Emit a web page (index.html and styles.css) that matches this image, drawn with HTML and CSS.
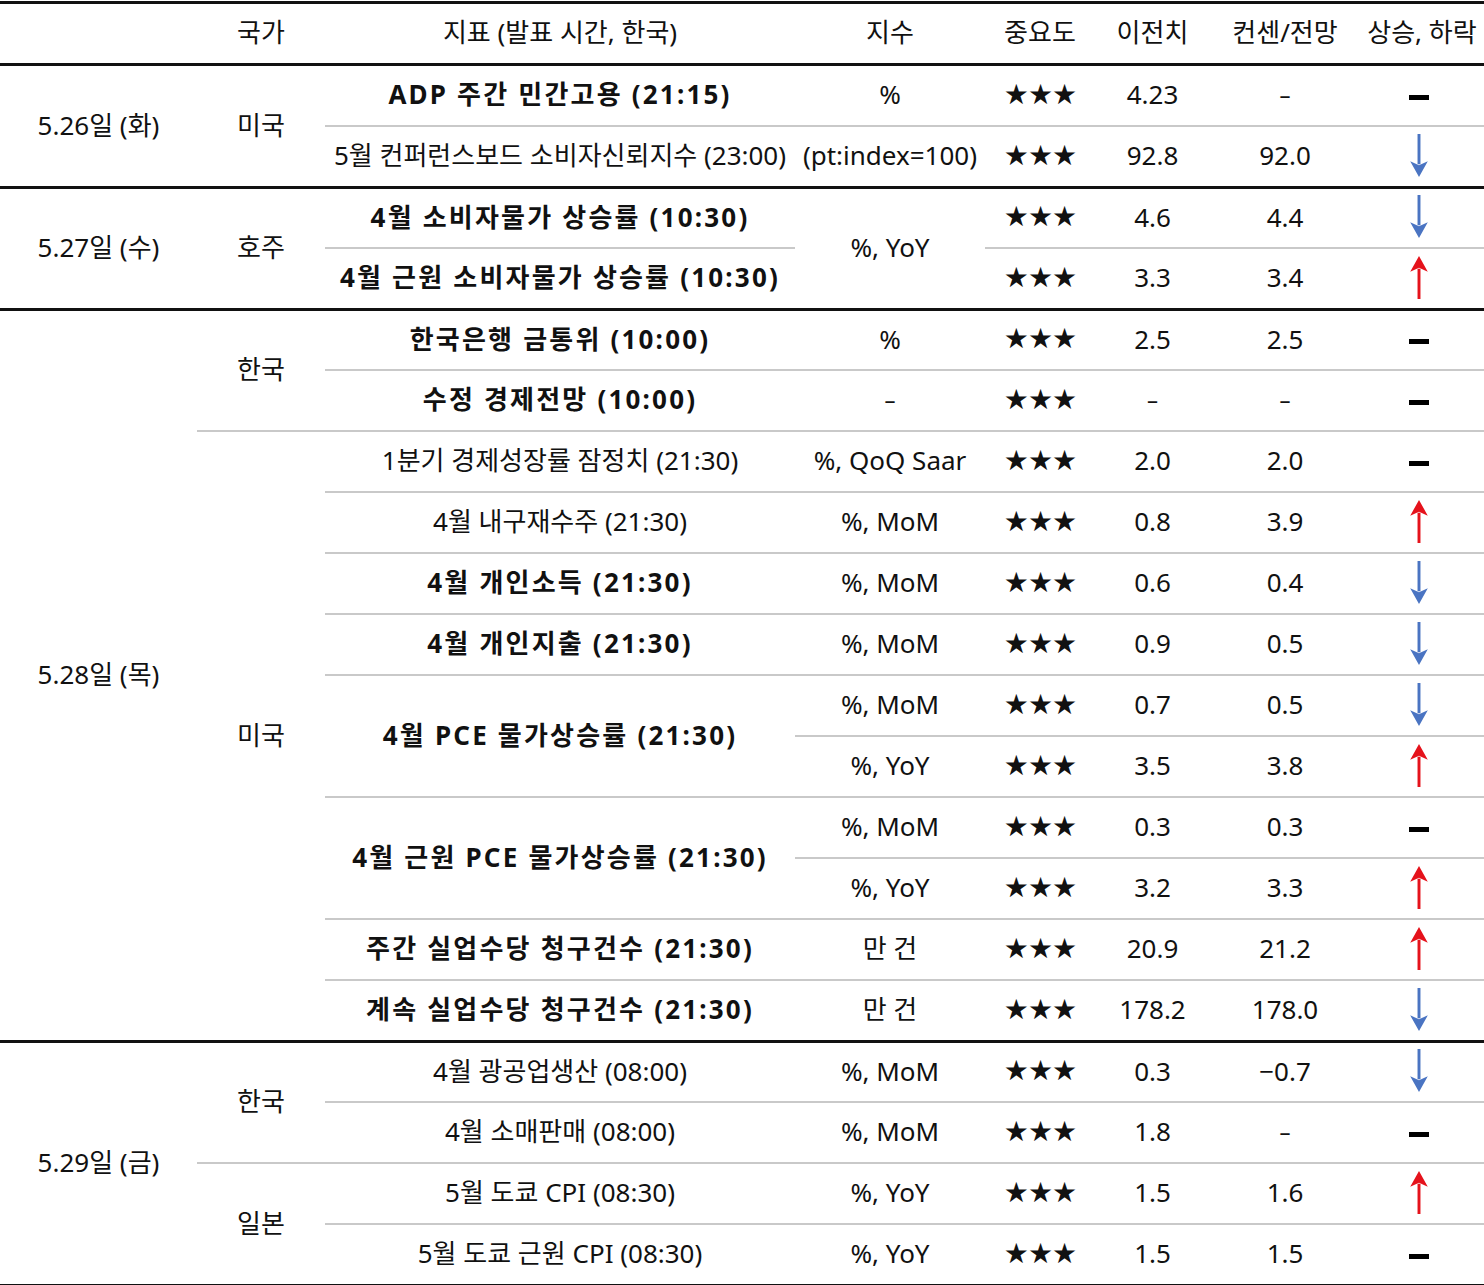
FILE: index.html
```html
<!DOCTYPE html>
<html lang="ko">
<head>
<meta charset="utf-8">
<title>주요 경제지표 일정</title>
<link rel="stylesheet" href="styles.css">
</head>
<body>
<svg class="defs" width="0" height="0" aria-hidden="true">
  <symbol id="down" viewBox="0 0 20 44">
    <rect x="8.5" y="0" width="3" height="31" fill="#4a74c2"/>
    <polygon points="1,28 10,32 19,28 10,44" fill="#4a74c2"/>
  </symbol>
  <symbol id="up" viewBox="0 0 20 44">
    <rect x="8.5" y="13" width="3" height="31" fill="#e5121b"/>
    <polygon points="1,16 10,12 19,16 10,0" fill="#e5121b"/>
  </symbol>
</svg>
<table class="cal">
  <colgroup>
    <col class="c-date"><col class="c-ctry"><col class="c-ind"><col class="c-idx"><col class="c-imp"><col class="c-prev"><col class="c-cons"><col class="c-dir">
  </colgroup>
  <thead>
    <tr>
      <th></th><th>국가</th><th>지표 (발표 시간, 한국)</th><th>지수</th><th>중요도</th><th>이전치</th><th>컨센/전망</th><th>상승, 하락</th>
    </tr>
  </thead>
  <tbody class="grp">
    <tr>
      <td rowspan="2">5.26일 (화)</td><td rowspan="2">미국</td>
      <td class="b">ADP 주간 민간고용 (21:15)</td><td>%</td><td class="star">★★★</td><td>4.23</td><td class="nd">–</td><td><span class="dash"></span></td>
    </tr>
    <tr>
      <td>5월 컨퍼런스보드 소비자신뢰지수 (23:00)</td><td>(pt:index=100)</td><td class="star">★★★</td><td>92.8</td><td>92.0</td><td><svg class="arr"><use href="#down"/></svg></td>
    </tr>
  </tbody>
  <tbody class="grp">
    <tr>
      <td rowspan="2">5.27일 (수)</td><td rowspan="2">호주</td>
      <td class="b">4월 소비자물가 상승률 (10:30)</td><td rowspan="2">%, YoY</td><td class="star">★★★</td><td>4.6</td><td>4.4</td><td><svg class="arr"><use href="#down"/></svg></td>
    </tr>
    <tr>
      <td class="b">4월 근원 소비자물가 상승률 (10:30)</td><td class="star">★★★</td><td>3.3</td><td>3.4</td><td><svg class="arr"><use href="#up"/></svg></td>
    </tr>
  </tbody>
  <tbody class="grp">
    <tr>
      <td rowspan="12">5.28일 (목)</td><td rowspan="2">한국</td>
      <td class="b">한국은행 금통위 (10:00)</td><td>%</td><td class="star">★★★</td><td>2.5</td><td>2.5</td><td><span class="dash"></span></td>
    </tr>
    <tr>
      <td class="b">수정 경제전망 (10:00)</td><td class="nd">–</td><td class="star">★★★</td><td class="nd">–</td><td class="nd">–</td><td><span class="dash"></span></td>
    </tr>
    <tr>
      <td rowspan="10">미국</td>
      <td>1분기 경제성장률 잠정치 (21:30)</td><td>%, QoQ Saar</td><td class="star">★★★</td><td>2.0</td><td>2.0</td><td><span class="dash"></span></td>
    </tr>
    <tr>
      <td>4월 내구재수주 (21:30)</td><td>%, MoM</td><td class="star">★★★</td><td>0.8</td><td>3.9</td><td><svg class="arr"><use href="#up"/></svg></td>
    </tr>
    <tr>
      <td class="b">4월 개인소득 (21:30)</td><td>%, MoM</td><td class="star">★★★</td><td>0.6</td><td>0.4</td><td><svg class="arr"><use href="#down"/></svg></td>
    </tr>
    <tr>
      <td class="b">4월 개인지출 (21:30)</td><td>%, MoM</td><td class="star">★★★</td><td>0.9</td><td>0.5</td><td><svg class="arr"><use href="#down"/></svg></td>
    </tr>
    <tr>
      <td rowspan="2" class="b">4월 PCE 물가상승률 (21:30)</td><td>%, MoM</td><td class="star">★★★</td><td>0.7</td><td>0.5</td><td><svg class="arr"><use href="#down"/></svg></td>
    </tr>
    <tr>
      <td>%, YoY</td><td class="star">★★★</td><td>3.5</td><td>3.8</td><td><svg class="arr"><use href="#up"/></svg></td>
    </tr>
    <tr>
      <td rowspan="2" class="b">4월 근원 PCE 물가상승률 (21:30)</td><td>%, MoM</td><td class="star">★★★</td><td>0.3</td><td>0.3</td><td><span class="dash"></span></td>
    </tr>
    <tr>
      <td>%, YoY</td><td class="star">★★★</td><td>3.2</td><td>3.3</td><td><svg class="arr"><use href="#up"/></svg></td>
    </tr>
    <tr>
      <td class="b">주간 실업수당 청구건수 (21:30)</td><td>만 건</td><td class="star">★★★</td><td>20.9</td><td>21.2</td><td><svg class="arr"><use href="#up"/></svg></td>
    </tr>
    <tr>
      <td class="b">계속 실업수당 청구건수 (21:30)</td><td>만 건</td><td class="star">★★★</td><td>178.2</td><td>178.0</td><td><svg class="arr"><use href="#down"/></svg></td>
    </tr>
  </tbody>
  <tbody class="grp last">
    <tr>
      <td rowspan="4">5.29일 (금)</td><td rowspan="2">한국</td>
      <td>4월 광공업생산 (08:00)</td><td>%, MoM</td><td class="star">★★★</td><td>0.3</td><td>−0.7</td><td><svg class="arr"><use href="#down"/></svg></td>
    </tr>
    <tr>
      <td>4월 소매판매 (08:00)</td><td>%, MoM</td><td class="star">★★★</td><td>1.8</td><td class="nd">–</td><td><span class="dash"></span></td>
    </tr>
    <tr>
      <td rowspan="2">일본</td>
      <td>5월 도쿄 CPI (08:30)</td><td>%, YoY</td><td class="star">★★★</td><td>1.5</td><td>1.6</td><td><svg class="arr"><use href="#up"/></svg></td>
    </tr>
    <tr>
      <td>5월 도쿄 근원 CPI (08:30)</td><td>%, YoY</td><td class="star">★★★</td><td>1.5</td><td>1.5</td><td><span class="dash"></span></td>
    </tr>
  </tbody>
</table>
</body>
</html>
```
FILE: styles.css
```css
html, body {
  margin: 0;
  padding: 0;
  background: #ffffff;
}

body {
  padding-top: 1px;
  font-family: "Noto Sans", "Noto Sans CJK KR", sans-serif;
  color: #111111;
}

.defs {
  position: absolute;
  width: 0;
  height: 0;
  overflow: hidden;
}

.cal {
  width: 1484px;
  table-layout: fixed;
  border-collapse: separate;
  border-spacing: 0;
  border-top: 3px solid #111111;
  border-bottom: 3px solid #111111;
  font-size: 26px;
}

.c-date { width: 197px; }
.c-ctry { width: 128px; }
.c-ind  { width: 470px; }
.c-idx  { width: 190px; }
.c-imp  { width: 110px; }
.c-prev { width: 115px; }
.c-cons { width: 150px; }
.c-dir  { width: 124px; }

.cal th,
.cal td {
  box-sizing: border-box;
  padding: 0;
  text-align: center;
  vertical-align: middle;
  white-space: nowrap;
  font-weight: 400;
  line-height: 30px;
}

.cal th {
  height: 62px;
  padding-bottom: 3px;
  border-bottom: 3px solid #111111;
}

.cal td {
  height: 61px;
  padding-bottom: 3px;
  border-top: 2px solid #c9c9c9;
}

.cal tbody.grp > tr:first-child > td {
  border-top: 3px solid #111111;
}

.cal thead + tbody.grp > tr:first-child > td {
  border-top: 0;
  height: 59px;
}

.cal td.b {
  font-weight: 700;
  letter-spacing: 2.2px;
}

.cal td.star {
  font-family: "DejaVu Sans", sans-serif;
  font-size: 28px;
  letter-spacing: -1px;
  padding-bottom: 2px;
}

.cal td.nd {
  font-size: 22px;
}

.dash {
  display: inline-block;
  width: 20px;
  height: 5px;
  margin-right: 7px;
  background: #000000;
  vertical-align: middle;
}

.arr {
  display: inline-block;
  width: 20px;
  height: 43px;
  margin-right: 7px;
  vertical-align: middle;
}
```
